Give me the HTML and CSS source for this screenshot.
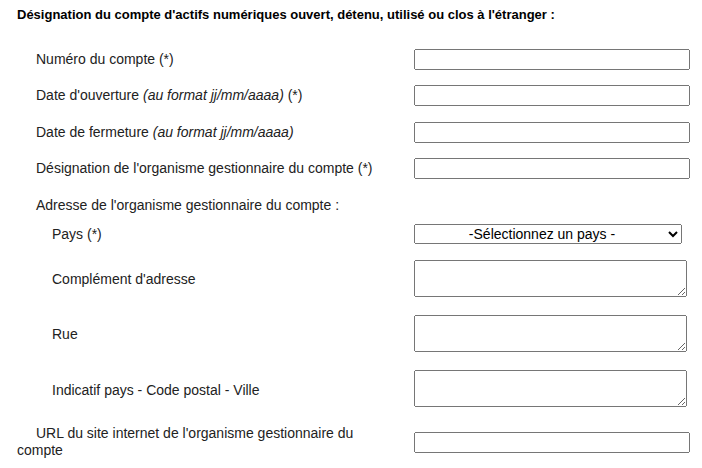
FILE: index.html
```html
<!DOCTYPE html>
<html>
	<head>
		<title>Compte d'actifs numériques</title>
		<link rel="stylesheet" href="styles.css">
	</head>
	<body>
		<section class="bloc">
			<p class="titre">Désignation du compte d'actifs numériques ouvert, détenu, utilisé ou clos à l'étranger :</p>

			<div class="grille">
				<label class="lib niv1" for="numero">Numéro du compte (*)</label>
				<div class="champ"><input type="text" id="numero"></div>

				<label class="lib niv1" for="ouverture">Date d'ouverture <em>(au format jj/mm/aaaa)</em> (*)</label>
				<div class="champ"><input type="text" id="ouverture"></div>

				<label class="lib niv1" for="fermeture">Date de fermeture <em>(au format jj/mm/aaaa)</em></label>
				<div class="champ"><input type="text" id="fermeture"></div>

				<label class="lib niv1" for="organisme">Désignation de l'organisme gestionnaire du compte (*)</label>
				<div class="champ"><input type="text" id="organisme"></div>

				<div class="lib niv1 pleine">Adresse de l'organisme gestionnaire du compte :</div>

				<label class="lib niv2" for="pays">Pays (*)</label>
				<div class="champ">
					<select id="pays">
						<option>-Sélectionnez un pays -</option>
					</select>
				</div>

				<label class="lib niv2" for="complement">Complément d'adresse</label>
				<div class="champ"><textarea id="complement"></textarea></div>

				<label class="lib niv2" for="rue">Rue</label>
				<div class="champ"><textarea id="rue"></textarea></div>

				<label class="lib niv2" for="ville">Indicatif pays - Code postal - Ville</label>
				<div class="champ"><textarea id="ville"></textarea></div>

				<label class="lib niv1" for="url">URL du site internet de l'organisme gestionnaire du compte</label>
				<div class="champ"><input type="text" id="url"></div>
			</div>
		</section>
	</body>
</html>
```

FILE: styles.css
```css
body {
	margin: 0;
	font-family: "Liberation Sans", Arial, sans-serif;
	font-size: 14px;
	color: #222;
	background: #fff;
}
.bloc {
	padding: 0 12px 0 17px;
}
.titre {
	font-weight: bold;
	font-size: 13px;
	color: #000;
	margin: 7px 0 0 0;
	line-height: 15px;
}
.grille {
	display: grid;
	grid-template-columns: 380px 276px;
	column-gap: 17px;
	align-items: center;
	margin-top: 19.3px;
}
.lib {
	padding: 7.67px 0;
	line-height: 17px;
}
.niv1 {
	text-indent: 19px;
}
.niv2 {
	text-indent: 35px;
}
.pleine {
	grid-column: 1 / 3;
	padding: 10px 0 3px 0;
}
.champ {
	padding: 7.67px 0;
}
.champ input {
	display: block;
	box-sizing: border-box;
	width: 276px;
	height: 21px;
	margin: 0;
}
.champ select {
	display: block;
	box-sizing: border-box;
	width: 268px;
	height: 20px;
	margin: 0;
	font-family: "Liberation Sans", Arial, sans-serif;
	font-size: 14px;
	color: #000;
	text-align: center;
	text-align-last: center;
}
.champ textarea {
	display: block;
	box-sizing: border-box;
	width: 273px;
	height: 37px;
	margin: 0 0 3px 0;
}
```
